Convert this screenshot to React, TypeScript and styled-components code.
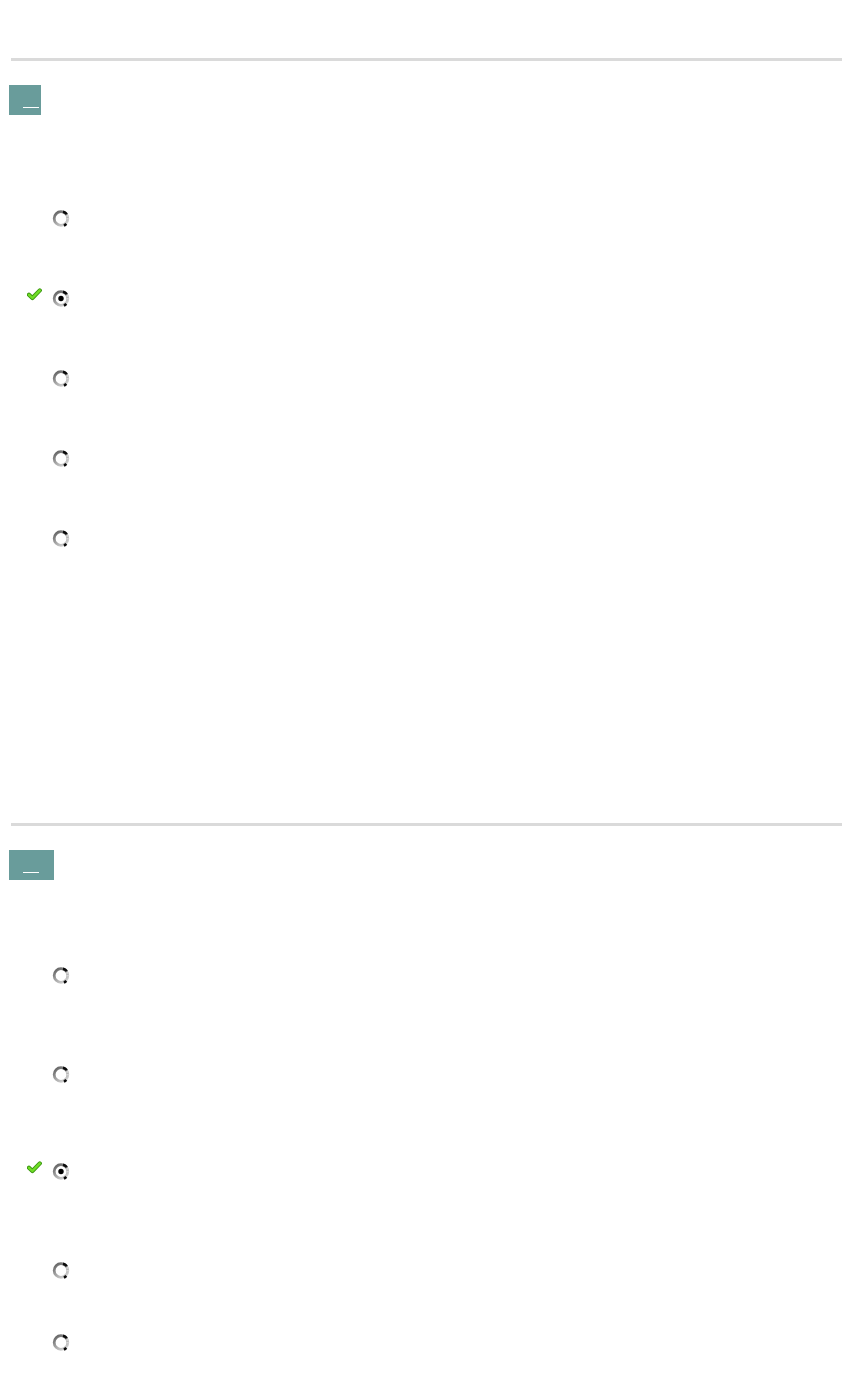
import React from "react";
import styled, { createGlobalStyle } from "styled-components";

const Global = createGlobalStyle`
  html, body { margin: 0; padding: 0; background: #ffffff; }
  body { font-family: "Liberation Sans", Arial, sans-serif; font-size: 13px; color: #000; }
`;

const Page = styled.div`
  width: 851px;
  min-height: 1373px;
  padding-top: 58px;
  box-sizing: border-box;
  background: #ffffff;
`;

const Section = styled.section<{ $gapAfter?: number }>`
  display: flex;
  flex-direction: column;
  margin-bottom: ${(p) => p.$gapAfter ?? 0}px;
`;

const Rule = styled.hr`
  margin: 0 0 0 11px;
  width: 831px;
  height: 3px;
  border: 0;
  background: #dadada;
`;

const Toggle = styled.button<{ $w: number }>`
  margin: 24px 0 0 9px;
  width: ${(p) => p.$w}px;
  height: 30px;
  padding: 0 0 7px 14px;
  border: 0;
  background: #699c9b;
  display: flex;
  align-items: flex-end;
  box-sizing: border-box;
  cursor: pointer;
`;

const Underline = styled.span`
  display: block;
  width: 16px;
  height: 1px;
  background: #ffffff;
`;

const OptionList = styled.div`
  display: flex;
  flex-direction: column;
`;

const Option = styled.label<{ $top: number }>`
  display: flex;
  align-items: flex-start;
  margin-top: ${(p) => p.$top}px;
  padding-left: 27px;
  height: 19px;
`;

const CheckSlot = styled.span`
  width: 25px;
  height: 12px;
  margin-top: -1px;
  display: flex;
`;

const Check = () => (
  <svg width="15" height="13" viewBox="0 0 15 13">
    <path
      d="M2 6.8 L5.4 10 L12.8 2.4"
      fill="none"
      stroke="#3c9612"
      strokeWidth="4.2"
      strokeLinecap="round"
      strokeLinejoin="round"
    />
    <path
      d="M2 6.8 L5.4 10 L12.8 2.4"
      fill="none"
      stroke="#70de26"
      strokeWidth="2.4"
      strokeLinecap="round"
      strokeLinejoin="round"
    />
  </svg>
);

const Radio = ({ checked, id }: { checked?: boolean; id: string }) => (
  <svg width="18" height="19" viewBox="0 0 18 19">
    <defs>
      <linearGradient id={id} x1="0" y1="0" x2="0.7" y2="1">
        <stop offset="0" stopColor="#5a5a5a" />
        <stop offset="0.5" stopColor="#9a9a9a" />
        <stop offset="1" stopColor="#cfcfcf" />
      </linearGradient>
    </defs>
    <circle cx="9" cy="9.5" r="6.8" fill="#ffffff" stroke={`url(#${id})`} strokeWidth="2.8" />
    <path d="M13.4 4.4 A6.8 6.8 0 0 1 15.7 10.5" fill="none" stroke="#d8d8d8" strokeWidth="2.2" strokeDasharray="1.5 1" />
    <path d="M11 2.7 A7 7 0 0 1 14.8 5.2" fill="none" stroke="#0a0a0a" strokeWidth="2.6" />
    <path d="M14.3 14.9 A7 7 0 0 1 11.9 16.6" fill="none" stroke="#0a0a0a" strokeWidth="2.6" />
    {checked && <circle cx="9" cy="9.5" r="2.7" fill="#000" />}
  </svg>
);

type Opt = { top: number; checked?: boolean };

const group1: Opt[] = [
  { top: 94 },
  { top: 61, checked: true },
  { top: 61 },
  { top: 61 },
  { top: 61 },
];

const group2: Opt[] = [
  { top: 86 },
  { top: 80 },
  { top: 78, checked: true },
  { top: 80 },
  { top: 53 },
];

const Question = ({
  opts,
  w,
  gapAfter,
  name,
}: {
  opts: Opt[];
  w: number;
  gapAfter?: number;
  name: string;
}) => (
  <Section $gapAfter={gapAfter}>
    <Rule />
    <Toggle $w={w} aria-label="toggle">
      <Underline />
    </Toggle>
    <OptionList>
      {opts.map((o, i) => (
        <Option key={i} $top={o.top}>
          <CheckSlot>{o.checked && <Check />}</CheckSlot>
          <Radio checked={o.checked} id={`${name}-g${i}`} />
        </Option>
      ))}
    </OptionList>
  </Section>
);

export default function App() {
  return (
    <>
      <Global />
      <Page>
        <Question name="q1" opts={group1} w={32} gapAfter={275} />
        <Question name="q2" opts={group2} w={45} />
      </Page>
    </>
  );
}
